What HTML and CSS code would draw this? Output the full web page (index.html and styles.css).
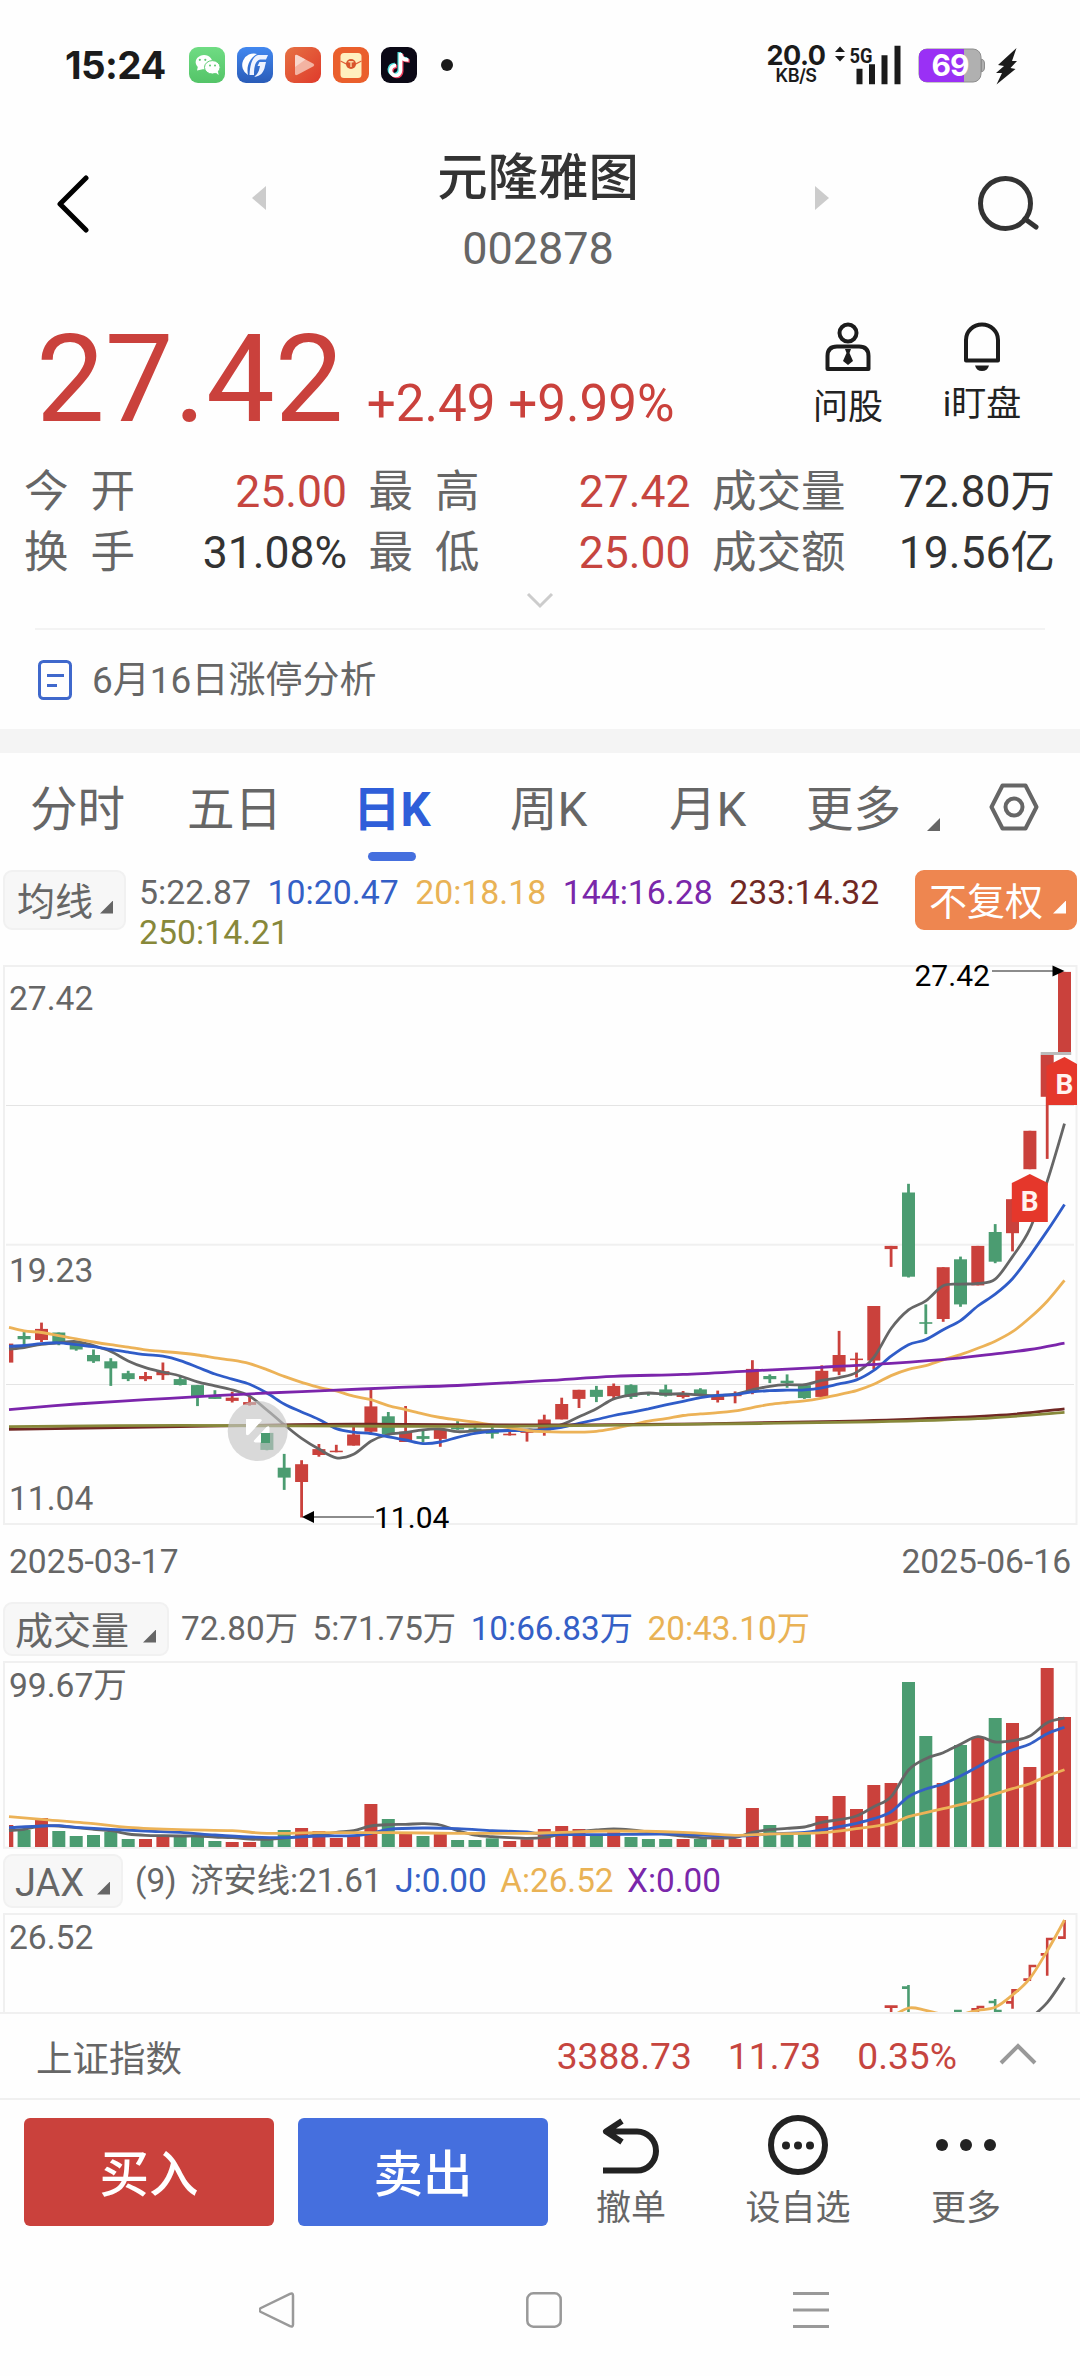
FILE: index.html
```html
<!DOCTYPE html>
<html lang="zh-CN">
<head>
    <meta charset="UTF-8">
    <meta name="viewport" content="width=device-width, initial-scale=1.0">
    <title>元隆雅图 002878</title>
    <link rel="stylesheet" href="styles.css">
</head>
<body>
    <div class="status-bar">
        <span class="time">15:24</span>
        <div class="apps">
            <svg width="36" height="36" viewBox="0 0 36 36">
                <defs><linearGradient id="gGreen" x1="0" y1="0" x2="0" y2="1"><stop offset="0" stop-color="#6fdc83"/><stop offset="1" stop-color="#54c468"/></linearGradient></defs>
                <rect width="36" height="36" rx="9" fill="url(#gGreen)"/>
                <path d="M8 23.500l0.800-3.500a8.300 7.200 0 1 1 5 2.300z" fill="#fff"/>
                <circle cx="10.800" cy="12.800" r="1.100" fill="#5cc870"/><circle cx="16.300" cy="12.800" r="1.100" fill="#5cc870"/>
                <ellipse cx="23.300" cy="20.300" rx="7.800" ry="6.700" fill="#fff" stroke="#5fcd74" stroke-width="1"/>
                <path d="M26 25l3.600 3-.7-4z" fill="#fff"/>
                <circle cx="21" cy="18.500" r="1" fill="#5cc870"/><circle cx="26" cy="18.500" r="1" fill="#5cc870"/>
            </svg>
            <svg width="36" height="36" viewBox="0 0 36 36">
                <defs><linearGradient id="gBlue" x1="0" y1="0" x2="0" y2="1"><stop offset="0" stop-color="#4288f0"/><stop offset="1" stop-color="#2a5cb8"/></linearGradient></defs>
                <rect width="36" height="36" rx="9" fill="url(#gBlue)"/>
                <path d="M20 7a11.500 11.500 0 0 0-9 21C9 19 13 11 20 7z" fill="#fff"/>
                <path d="M31 8H21c-6 2-8 10-8.500 20h4.500c0-8 1-14 6-15.500h6zM29 15h-6.500l-2 4H23c-1 5-2 8-6 11 7-1 10-5 11-11z" fill="#eef3ff"/>
            </svg>
            <svg width="36" height="36" viewBox="0 0 36 36">
                <defs><linearGradient id="gRed" x1="0" y1="0" x2="1" y2="1"><stop offset="0" stop-color="#e67243"/><stop offset="1" stop-color="#df3a2b"/></linearGradient></defs>
                <rect width="36" height="36" rx="9" fill="url(#gRed)"/>
                <path d="M10 9.500q0-2.500 2.500-1.200l16 8.500q1.500 1.200 0 2.400l-16 8.500q-2.500 1.300-2.500-1.200z" fill="#f3b3a2"/>
                <path d="M10 9.500q0-2.500 2.500-1.200l8 4.200L10 20z" fill="#f8d6cb"/>
            </svg>
            <svg width="36" height="36" viewBox="0 0 36 36">
                <rect width="36" height="36" rx="9" fill="#ea5f2c"/>
                <rect x="7.500" y="6" width="21" height="25" rx="3.500" fill="#fff0be"/>
                <path d="M7.500 14l8 4h5l8-4" fill="none" stroke="#e2603a" stroke-width="1.300"/>
                <circle cx="18" cy="17" r="5" fill="#d9552c"/>
                <path d="M15.500 14.800h5M18 15v5" stroke="#fbd7a4" stroke-width="1.400"/>
            </svg>
            <svg width="36" height="36" viewBox="0 0 36 36">
                <rect width="36" height="36" rx="9" fill="#0b0916"/>
                <g fill="none" stroke-width="3.600">
                    <path d="M18 5v17.500a5 5 0 1 1-4.500-5M18 5c0 4.500 3 7 8 7" transform="translate(0.300 0)" stroke="#4fe0dd"/>
                    <path d="M18 5v17.500a5 5 0 1 1-4.500-5M18 5c0 4.500 3 7 8 7" transform="translate(2.700 2)" stroke="#ee3c5c"/>
                    <path d="M18 5v17.500a5 5 0 1 1-4.500-5M18 5c0 4.500 3 7 8 7" transform="translate(1.500 1)" stroke="#fff"/>
                </g>
            </svg>
            <i class="dot"></i>
        </div>
        <div class="speed"><b>20.0</b><small>KB/S</small></div>
        <svg class="signal" width="69" height="38" viewBox="0 0 69 38">
            <path d="M1 6l5-5.500L11 6zM1 10l5 5.500L11 10z" fill="#1b1b1b"/>
            <text x="15.500" y="16.500" class="net" textLength="23" lengthAdjust="spacingAndGlyphs">5G</text>
            <path d="M25.500 25.500V35M38 21V35M50.500 12V35M63.500 2.500V35" stroke="#1b1b1b" stroke-width="6" stroke-linecap="square" transform="translate(0 .2)"/>
        </svg>
        <svg class="battery" width="67" height="36" viewBox="0 0 67 36">
            <rect x="1" y="1" width="62" height="33" rx="8" fill="#b0b0b0" stroke="#8e8e8e"/>
            <path d="M63.500 11q3 1 3 4v5q0 3-3 4z" fill="#b0b0b0" stroke="#8e8e8e" stroke-width="1"/>
            <path d="M9 1h37v33H9q-8 0-8-8V9q0-8 8-8z" fill="#9a30f5"/>
            <text x="32" y="28" class="level">69</text>
        </svg>
        <svg class="bolt" width="22" height="37" viewBox="0 0 22 37">
            <path d="M20.500 0L2 17l6 1L0 25h6L.5 36.500 19.500 21l-5-1 6.500-7h-5z" fill="#1b1b1b"/>
        </svg>
    </div>

    <div class="header">
        <svg class="back" width="34" height="60" viewBox="0 0 34 60"><path d="M29 4L3 30l26 26" fill="none" stroke="#000" stroke-width="5" stroke-linecap="round" stroke-linejoin="round"/></svg>
        <svg class="switch" width="14" height="24" viewBox="0 0 14 24"><path d="M14 0v24L0 12z" fill="#ccc"/></svg>
        <div class="title">
            <h1>元隆雅图</h1>
            <p>002878</p>
        </div>
        <svg class="switch" width="14" height="24" viewBox="0 0 14 24"><path d="M0 0v24l14-12z" fill="#ccc"/></svg>
        <svg class="search" width="64" height="58" viewBox="0 0 64 58"><circle cx="29.500" cy="28.500" r="25" fill="none" stroke="#333" stroke-width="5"/><path d="M49 44l11 8" stroke="#333" stroke-width="5" stroke-linecap="round"/></svg>
    </div>

    <div class="quote">
        <span class="price">27.42</span>
        <span class="change">+2.49 +9.99%</span>
        <div class="tools">
            <div class="tool">
                <svg width="46" height="50" viewBox="0 0 46 50">
                    <circle cx="23" cy="11" r="8.500" fill="none" stroke="#1c1c1c" stroke-width="4"/>
                    <path d="M2.500 47V34q0-9.500 9.500-9.500h22q9.500 0 9.500 9.500v13z" fill="none" stroke="#1c1c1c" stroke-width="4" stroke-linejoin="round"/>
                    <path d="M20 27h6l-1.500 4L28 39l-5 4-5-4 3.500-8z" fill="#1c1c1c"/>
                </svg>
                <span>问股</span>
            </div>
            <div class="tool tool-watch">
                <svg width="40" height="50" viewBox="0 0 40 50">
                    <path d="M4 38.500V18a16 15.500 0 0 1 32 0v20.500z" fill="none" stroke="#1c1c1c" stroke-width="4" stroke-linejoin="round"/>
                    <path d="M13 43.500h14q-1.500 5.500-7 5.500t-7-5.500z" fill="#1c1c1c"/>
                </svg>
                <span>i盯盘</span>
            </div>
        </div>
    </div>

    <div class="stats">
        <div><label class="wide">今开</label><span class="up">25.00</span></div>
        <div><label class="wide">最高</label><span class="up">27.42</span></div>
        <div><label>成交量</label><span>72.80万</span></div>
        <div><label class="wide">换手</label><span>31.08%</span></div>
        <div><label class="wide">最低</label><span class="up">25.00</span></div>
        <div><label>成交额</label><span>19.56亿</span></div>
    </div>
    <div class="expand">
        <svg width="28" height="18" viewBox="0 0 28 18"><path d="M2 2l12 12L26 2" fill="none" stroke="#ccc" stroke-width="3"/></svg>
    </div>

    <div class="analysis">
        <svg width="34" height="40" viewBox="0 0 34 40">
            <rect x="1.500" y="1.500" width="31" height="37" rx="4" fill="none" stroke="#3f68cc" stroke-width="3"/>
            <path d="M9 15.500h17M9 25.500h10" stroke="#3f68cc" stroke-width="3"/>
        </svg>
        <span>6月16日涨停分析</span>
    </div>

    <div class="tabs">
        <span>分时</span>
        <span>五日</span>
        <span class="active">日K</span>
        <span>周K</span>
        <span>月K</span>
        <span class="more">更多<i class="corner"></i></span>
        <svg width="50" height="48" viewBox="0 0 50 48"><path d="M13.500 2.500h23L47.500 24 36.500 45.500h-23L2.500 24z" fill="none" stroke="#666" stroke-width="4" stroke-linejoin="round"/><circle cx="25" cy="24" r="8.500" fill="none" stroke="#666" stroke-width="4"/></svg>
    </div>

    <div class="ma-row">
        <div class="pill pill-ma">均线<i class="corner"></i></div>
        <div class="legend">
            <span>5:22.87</span>
            <span class="blue">10:20.47</span>
            <span class="yellow">20:18.18</span>
            <span class="purple">144:16.28</span>
            <span class="brown">233:14.32</span>
            <span class="olive">250:14.21</span>
        </div>
        <div class="pill pill-orange">不复权<i class="corner"></i></div>
    </div>

    <svg id="priceChart" class="chart" width="1080" height="580" viewBox="0 0 1080 580"></svg>
    <div class="dates"><span>2025-03-17</span><span>2025-06-16</span></div>

    <div class="sub-row sub-volume">
        <div class="pill pill-volume">成交量<i class="corner"></i></div>
        <div class="legend">
            <span>72.80万</span>
            <span>5:71.75万</span>
            <span class="blue">10:66.83万</span>
            <span class="yellow">20:43.10万</span>
        </div>
    </div>
    <svg id="volumeChart" class="chart" width="1080" height="188" viewBox="0 0 1080 188"></svg>

    <div class="sub-row sub-jax">
        <div class="pill pill-jax">JAX<i class="corner"></i></div>
        <div class="legend">
            <span>(9)</span>
            <span>济安线:21.61</span>
            <span class="blue">J:0.00</span>
            <span class="yellow">A:26.52</span>
            <span class="purple">X:0.00</span>
        </div>
    </div>
    <svg id="jaxChart" class="chart" width="1080" height="99" viewBox="0 0 1080 99"></svg>

    <div class="index-row">
        <span class="name">上证指数</span>
        <span class="up">3388.73</span>
        <span class="up">11.73</span>
        <span class="up">0.35%</span>
        <svg width="38" height="22" viewBox="0 0 38 22"><path d="M2 20L19 3l17 17" fill="none" stroke="#999" stroke-width="4"/></svg>
    </div>

    <div class="actions">
        <button class="btn buy">买入</button>
        <button class="btn sell">卖出</button>
        <div class="action action-undo">
            <svg width="60" height="60" viewBox="0 0 60 60"><path d="M21 6L5 16.500 21 27M5 16.500h31a19 19.500 0 0 1 0 39H2" fill="none" stroke="#222" stroke-width="6" stroke-linejoin="round"/></svg>
            <span>撤单</span>
        </div>
        <div class="action action-star">
            <svg width="60" height="60" viewBox="0 0 60 60"><circle cx="30" cy="30" r="27" fill="none" stroke="#222" stroke-width="6"/><g fill="#222"><circle cx="18" cy="30.500" r="4"/><circle cx="30" cy="30.500" r="4"/><circle cx="42" cy="30.500" r="4"/></g></svg>
            <span>设自选</span>
        </div>
        <div class="action action-more">
            <svg width="60" height="60" viewBox="0 0 60 60"><g fill="#222"><circle cx="6" cy="30" r="6"/><circle cx="30" cy="30" r="6"/><circle cx="54" cy="30" r="6"/></g></svg>
            <span>更多</span>
        </div>
    </div>

    <div class="nav">
        <svg width="36" height="36" viewBox="0 0 36 36"><path d="M31 1.800q3-1.300 3 1.700v29q0 3-3 1.700L2 20q-3-2 0-4z" fill="none" stroke="#999" stroke-width="2.500"/></svg>
        <svg width="36" height="36" viewBox="0 0 36 36"><rect x="1.300" y="1.300" width="33.400" height="33.400" rx="6" fill="none" stroke="#999" stroke-width="2.500"/></svg>
        <svg width="36" height="36" viewBox="0 0 36 36"><path d="M0 1.500h36M0 18h36M0 34.500h36" stroke="#999" stroke-width="3"/></svg>
    </div>

    <script src="chart.js"></script>
</body>
</html>
```
FILE: styles.css
```css
* {
    box-sizing: border-box;
}
body {
    margin: 0;
    width: 1080px;
    height: 2376px;
    overflow: hidden;
    background-color: #fefefe;
    color: #666666;
    font-family: Roboto, "Noto Sans CJK SC", sans-serif;
}
svg {
    display: block;
    flex: none;
}
h1, p {
    margin: 0;
    font-weight: normal;
}

/* status bar */
.status-bar {
    display: flex;
    align-items: center;
    height: 130px;
    padding-left: 65px;
    color: #1b1b1b;
    font-family: Inter, sans-serif;
}
.time {
    width: 124px;
    font-size: 38.5px;
    font-weight: 700;
    letter-spacing: -0.6px;
    white-space: nowrap;
}
.apps {
    display: flex;
    align-items: center;
    gap: 12px;
    width: 575px;
}
.dot {
    width: 12px;
    height: 12px;
    margin-left: 12px;
    border-radius: 50%;
    background-color: #1b1b1b;
}
.speed {
    display: flex;
    flex-direction: column;
    align-items: center;
    width: 64px;
}
.speed b {
    font-size: 27px;
    font-weight: 700;
    line-height: 21px;
    letter-spacing: -0.5px;
}
.speed small {
    font-size: 18px;
    font-weight: 600;
    line-height: 19px;
    letter-spacing: -0.5px;
}
.signal {
    margin-left: 6px;
    overflow: visible;
}
.net {
    font: 700 21px Roboto, sans-serif;
    fill: #1b1b1b;
}
.battery {
    margin: 2px 0 0 15px;
}
.level {
    font: 700 30px Inter, sans-serif;
    letter-spacing: -1px;
    text-anchor: middle;
    fill: #ffffff;
}
.bolt {
    margin: 2px 0 0 11px;
}

/* header */
.header {
    display: grid;
    grid-template-columns: 195px 14px 1fr 14px 211px;
    height: 173px;
    padding: 13px 40px 0 57px;
}
.back {
    margin-top: 31px;
}
.switch {
    margin-top: 43px;
}
.title {
    padding-right: 5px;
    text-align: center;
}
.title h1 {
    font-size: 50.4px;
    font-weight: 500;
    line-height: 70px;
    color: #333333;
}
.title p {
    margin-top: 6px;
    font-size: 45px;
    line-height: 60px;
}
.search {
    margin: 32px 0 0 147px;
}

/* quote */
.quote {
    display: flex;
    align-items: baseline;
    height: 159px;
    padding-left: 36px;
    color: #ca413c;
}
.price {
    font-size: 122.5px;
    line-height: 153px;
}
.change {
    margin-left: 23px;
    font-size: 51.2px;
}
.tools {
    display: flex;
    align-self: flex-start;
    margin: 19px 0 0 auto;
    padding-right: 48px;
    color: #222222;
}
.tool {
    display: flex;
    flex-direction: column;
    align-items: center;
    width: 100px;
    font-size: 35px;
    line-height: 50px;
}
.tool span {
    margin-top: 11px;
}
.tool-watch {
    margin-left: 34px;
}
.tool-watch span {
    margin-top: 8px;
}
.stats {
    display: grid;
    grid-template-columns: 323px 322px 343px;
    column-gap: 21.5px;
    padding-left: 24px;
    font-size: 44.5px;
    line-height: 61px;
}
.stats div {
    display: flex;
    justify-content: space-between;
}
.stats span {
    color: #333333;
}
.stats .wide {
    letter-spacing: 22px;
}
.up, .stats .up {
    color: #c6453f;
}
.expand {
    display: flex;
    justify-content: center;
    height: 46px;
    margin: 0 35px;
    padding-top: 8px;
    border-bottom: 2px solid #f3f3f3;
}
.analysis {
    display: flex;
    align-items: center;
    gap: 20px;
    height: 123px;
    padding: 0 38px;
    border-bottom: 24px solid #f4f4f4;
    font-size: 37px;
}
.analysis span {
    padding-bottom: 5px;
}

/* tabs */
.tabs {
    display: grid;
    grid-template-columns: 157px 166px 157px 159px 137px 183px 50px;
    height: 113px;
    padding: 27px 0 0 30px;
    font-size: 47.5px;
    line-height: 60px;
}
.tabs svg {
    margin-top: 3px;
}
.active {
    font-weight: 700;
    color: #2f5ed9;
}
.active::after {
    content: "";
    display: block;
    width: 48px;
    height: 9px;
    margin: 12px 0 0 15px;
    border-radius: 4.5px;
    background-color: #456fde;
}
.corner {
    display: block;
    width: 13px;
    height: 13px;
    background-color: #666666;
    clip-path: polygon(100% 0, 100% 100%, 0 100%);
}
.more {
    display: flex;
}
.more .corner {
    margin: 38px 0 0 26px;
}

/* indicator rows */
.pill {
    display: flex;
    align-items: center;
    flex: none;
    height: 54px;
    padding-top: 3px;
    border: 2px solid #f1f1f1;
    border-radius: 9px;
    background-color: #f7f7f7;
    font-size: 38px;
    line-height: 50px;
}
.pill .corner {
    margin: 11px 11px 0 auto;
}
.legend {
    display: flex;
    flex-wrap: wrap;
    column-gap: 14.5px;
    font-size: 33.3px;
    line-height: 40px;
}
.ma-row {
    display: flex;
    align-items: flex-start;
    height: 94px;
    padding: 4px 3px 0;
}
.ma-row .pill {
    height: 60px;
}
.ma-row .legend {
    width: 760px;
    margin-top: 3px;
    column-gap: 16.5px;
    font-size: 33.8px;
}
.pill-ma {
    width: 123px;
    margin-right: 13px;
    padding-left: 12px;
}
.pill-orange {
    width: 162px;
    margin-left: auto;
    padding-left: 12px;
    border-color: #ee8650;
    background-color: #ee8650;
    color: #ffffff;
}
.pill-orange .corner {
    margin-right: 9px;
    background-color: #ffffff;
}
.blue {
    color: #345fc6;
}
.yellow {
    color: #e9b255;
}
.purple {
    color: #7a27aa;
}
.brown {
    color: #702824;
}
.olive {
    color: #87883a;
}
.dates {
    display: flex;
    justify-content: space-between;
    height: 44px;
    padding: 0 9px;
    font-size: 33.6px;
    line-height: 44px;
}
.sub-row {
    display: flex;
    align-items: center;
    padding-left: 3px;
}
.sub-volume {
    height: 77px;
    padding-top: 13px;
}
.sub-jax {
    height: 64px;
}
.sub-jax .legend {
    column-gap: 13.5px;
}
.pill-volume {
    width: 166px;
    margin-right: 12px;
    padding-left: 10px;
}
.pill-jax {
    width: 120px;
    margin-right: 12px;
    padding-left: 10px;
}

/* charts */
.chart {
    overflow: hidden;
}
.axis {
    font-size: 33.6px;
    fill: #666666;
}
.mark {
    font-size: 30px;
    fill: #000000;
}
.flag {
    font: 700 28px Roboto, sans-serif;
    text-anchor: middle;
    fill: #fff2f0;
}

/* bottom */
.index-row {
    display: flex;
    align-items: center;
    height: 88px;
    padding: 0 43px 0 36px;
    border-top: 2px solid #f0f0f0;
    border-bottom: 2px solid #f0f0f0;
    font-size: 37.2px;
}
.name {
    margin-right: auto;
    font-size: 36.5px;
}
.index-row .up {
    margin-right: 36px;
}
.index-row svg {
    margin: -4px 0 0 6px;
}
.actions {
    display: flex;
    height: 162px;
    padding: 18px 0 0 24px;
}
.btn {
    width: 250px;
    height: 108px;
    margin-right: 24px;
    padding: 0 0 4px;
    border: none;
    border-radius: 6px;
    color: #ffffff;
    font-family: inherit;
    font-size: 49.5px;
    font-weight: 500;
}
.buy {
    background-color: #ca413c;
}
.sell {
    background-color: #456fde;
}
.action {
    display: flex;
    flex-direction: column;
    align-items: center;
    width: 120px;
    margin-top: -3px;
    font-size: 35px;
    line-height: 50px;
}
.action span {
    margin-top: 9px;
    white-space: nowrap;
}
.action-undo {
    margin-left: -1px;
}
.action-star {
    margin-left: 47px;
}
.action-more {
    margin-left: 48px;
}
.nav {
    display: flex;
    gap: 231px;
    padding: 30px 0 0 259px;
}
```
FILE: chart.js
```js
var RED = "#ca413c";
var GREEN = "#4b9c71";
var STEP = 17.34;
var FIRST = 6.8;

// color, high, low, body top, body bottom
var candles = [
    ["r", 970, 1018, 970, 1018], ["g", 941, 974, 951, 959], ["r", 917, 966, 933, 961], ["g", 942, 974, 942, 968],
    ["g", 967, 988, 967, 985], ["g", 985, 1019, 999, 1015], ["g", 1007, 1077, 1015, 1033], ["g", 1039, 1065, 1045, 1060],
    ["r", 1042, 1065, 1052, 1060], ["r", 1018, 1062, 1040, 1050], ["g", 1053, 1076, 1060, 1075], ["g", 1075, 1128, 1075, 1103],
    ["g", 1088, 1110, 1103, 1110], ["r", 1092, 1119, 1107, 1115], ["r", 1103, 1127, 1118, 1125], ["g", 1190, 1240, 1196, 1239],
    ["g", 1249, 1340, 1284, 1309], ["r", 1265, 1410, 1275, 1320], ["r", 1224, 1256, 1237, 1252], ["r", 1226, 1245, 1241, 1244],
    ["r", 1180, 1228, 1200, 1228], ["r", 1085, 1200, 1129, 1193], ["g", 1143, 1203, 1154, 1200], ["r", 1128, 1219, 1193, 1219],
    ["g", 1190, 1220, 1204, 1211], ["r", 1185, 1231, 1187, 1211], ["g", 1166, 1188, 1182, 1187], ["g", 1178, 1195, 1185, 1189],
    ["g", 1180, 1210, 1188, 1198], ["r", 1190, 1203, 1198, 1202], ["r", 1190, 1218, 1192, 1196], ["r", 1150, 1203, 1162, 1190],
    ["r", 1107, 1162, 1123, 1162], ["r", 1087, 1133, 1087, 1110], ["g", 1077, 1118, 1087, 1105], ["r", 1071, 1108, 1077, 1103],
    ["g", 1073, 1110, 1075, 1105], ["g", 1093, 1102, 1094, 1098], ["g", 1074, 1104, 1086, 1102], ["r", 1090, 1109, 1096, 1105],
    ["g", 1083, 1103, 1086, 1102], ["r", 1089, 1119, 1101, 1113], ["r", 1091, 1121, 1098, 1103], ["r", 1012, 1098, 1034, 1090],
    ["g", 1048, 1070, 1052, 1060], ["g", 1048, 1082, 1064, 1070], ["g", 1075, 1110, 1075, 1108], ["r", 1025, 1108, 1039, 1105],
    ["r", 938, 1050, 999, 1041], ["r", 993, 1056, 1008, 1011], ["r", 875, 1035, 875, 1013], ["r", 723, 776, 723, 731],
    ["g", 566, 803, 588, 801], ["g", 871, 946, 916, 920], ["r", 777, 915, 777, 908], ["g", 750, 877, 757, 871],
    ["r", 723, 823, 723, 823], ["g", 668, 767, 688, 763], ["r", 605, 737, 605, 691], ["r", 432, 529, 432, 529],
    ["r", 240, 503, 240, 346], ["r", 30, 235, 30, 235]
];

var ma5 = [984, 980, 972, 968, 965, 975, 990, 1014, 1031, 1042, 1052, 1067, 1077, 1087, 1103, 1138, 1175, 1210, 1237, 1259, 1250, 1217, 1200, 1195, 1188, 1186, 1193, 1191, 1190, 1190, 1188, 1187, 1175, 1155, 1135, 1110, 1100, 1095, 1098, 1097, 1100, 1102, 1098, 1087, 1078, 1074, 1074, 1063, 1056, 1043, 1005, 932, 885, 862, 824, 820, 818, 807, 750, 680, 560, 414];
var ma10 = [977, 975, 970, 968, 973, 978, 985, 992, 998, 1002, 1013, 1030, 1047, 1060, 1073, 1095, 1123, 1143, 1162, 1185, 1194, 1198, 1206, 1214, 1223, 1219, 1207, 1197, 1192, 1190, 1190, 1188, 1182, 1172, 1162, 1152, 1144, 1135, 1125, 1116, 1107, 1101, 1099, 1092, 1089, 1088, 1087, 1082, 1072, 1062, 1038, 1002, 973, 960, 935, 912, 875, 845, 806, 748, 685, 618];
var ma20 = [929, 938, 942, 950, 958, 966, 973, 979, 986, 990, 994, 999, 1006, 1012, 1021, 1036, 1053, 1068, 1081, 1090, 1103, 1112, 1127, 1137, 1148, 1157, 1163, 1169, 1176, 1183, 1190, 1193, 1194, 1194, 1192, 1185, 1176, 1166, 1160, 1152, 1148, 1145, 1140, 1132, 1124, 1119, 1115, 1108, 1099, 1089, 1073, 1051, 1035, 1026, 1011, 998, 982, 964, 940, 905, 863, 810];
var ma144 = [[0, 1137], [4, 1123], [8, 1112], [12, 1102], [15, 1095], [19, 1088], [22, 1082], [26, 1076], [31, 1064], [35, 1053], [39, 1048], [43, 1039], [47, 1030], [51, 1020], [55, 1006], [57, 996], [59, 985], [61, 969]];
var ma233 = [[0, 1187], [10, 1180], [20, 1174], [30, 1176], [40, 1173], [48, 1167], [54, 1158], [58, 1149], [61, 1135]];
var ma250 = [[0, 1180], [10, 1177], [20, 1179], [30, 1179], [40, 1174], [50, 1168], [56, 1160], [61, 1144]];

var volumes = [735, 750, 714, 753, 768, 765, 755, 777, 777, 768, 768, 770, 783, 786, 786, 775, 750, 744, 753, 774, 765, 672, 717, 762, 768, 762, 780, 780, 775, 783, 778, 747, 738, 747, 765, 757, 771, 777, 777, 777, 777, 778, 777, 684, 735, 762, 762, 708, 648, 687, 615, 609, 306, 468, 609, 495, 472, 414, 429, 561, 264, 411];
var vol5 = [752, 748, 738, 738, 743, 748, 752, 762, 766, 767, 768, 768, 771, 773, 777, 778, 774, 770, 765, 757, 752, 738, 734, 733, 731, 735, 752, 765, 770, 773, 775, 772, 762, 755, 750, 747, 750, 756, 762, 768, 773, 774, 773, 757, 749, 745, 741, 727, 719, 708, 680, 650, 570, 536, 518, 493, 470, 486, 482, 468, 428, 414];
var vol10 = [[0, 743], [2, 738], [3, 737], [4, 742], [6, 748], [8, 753], [10, 757], [12, 765], [14, 771], [16, 773], [18, 768], [20, 767], [21, 760], [22, 748], [24, 744], [26, 746], [28, 752], [30, 756], [31, 763], [34, 764], [38, 762], [42, 768], [44, 762], [46, 757], [47, 750], [48, 740], [49, 730], [50, 716], [51, 695], [52, 650], [53, 627], [54, 612], [55, 588], [56, 560], [57, 532], [58, 510], [59, 492], [60, 461], [61, 442]];
var vol20 = [[0, 710], [2, 718], [5, 731], [7, 742], [10, 749], [13, 752], [15, 760], [18, 758], [22, 758], [26, 760], [30, 760], [32, 757], [35, 753], [39, 757], [42, 766], [44, 762], [47, 758], [49, 746], [51, 730], [52, 710], [53, 698], [54, 686], [55, 674], [56, 660], [57, 642], [58, 626], [59, 611], [60, 588], [61, 569]];

// index, color, high, low, left tick, right tick
var jaxBars = [
    [51, "r", 1280, 1310, 1280, 1280], [52, "g", 1215, 1310, 1223, null], [55, "g", 1290, 1310, 1293, null],
    [56, "r", 1280, 1310, 1288, 1281], [57, "g", 1257, 1310, 1266, 1293], [58, "r", 1228, 1286, 1267, 1231],
    [59, "r", 1157, 1200, 1199, 1158], [60, "r", 1076, 1187, 1123, 1077], [61, "r", 1020, 1074, 1073, null]
];
var jaxA = [[51, 1312], [52, 1284], [53, 1291], [54, 1303], [55, 1303], [56, 1291], [57, 1282], [58, 1245], [59, 1195], [60, 1113], [61, 1020]];
var jaxLine = [[59, 1316], [60, 1268], [61, 1193]];

function priceY(v) { return v / 2.529; }
function volumeY(v) { return v / 3 - 81; }
function jaxY(v) { return v / 3 - 333; }
function posX(i) { return FIRST + i * STEP; }

function rect(x, y, w, h, fill) {
    return '<rect x="' + x.toFixed(1) + '" y="' + y.toFixed(1) + '" width="' + w.toFixed(1) + '" height="' + h.toFixed(1) + '" fill="' + fill + '"/>';
}

function stroke(d, color, width) {
    return '<path d="' + d + '" fill="none" stroke="' + color + '" stroke-width="' + width + '"/>';
}

function curve(data, toY, color) {
    var pts = data.map(function(v, i) {
        return Array.isArray(v) ? [Math.max(posX(v[0]), 9), toY(v[1])] : [Math.max(posX(i), 9), toY(v)];
    });
    var d = "M" + pts[0].join(" ");
    for (var i = 0; i < pts.length - 1; i++) {
        var a = pts[i - 1] || pts[i], b = pts[i], c = pts[i + 1], e = pts[i + 2] || c;
        d += "C" + [
            b[0] + (c[0] - a[0]) / 6, b[1] + (c[1] - a[1]) / 6,
            c[0] - (e[0] - b[0]) / 6, c[1] - (e[1] - b[1]) / 6,
            c[0], c[1]
        ].map(function(n) { return n.toFixed(1); }).join(" ");
    }
    return stroke(d, color, 2.8);
}

function body(i, top, bottom, color) {
    var left = Math.max(posX(i) - 6.5, 9);
    return rect(left, top, posX(i) + 6.5 - left, Math.max(bottom - top, 1.5), color);
}

function flag(x, y, clip) {
    var right = clip ? x + 12.5 : x + 18;
    var corner = clip ? y + 7 : y + 9;
    return '<path d="M' + x + ' ' + y + 'L' + right + ' ' + corner + 'V' + (y + 48) + 'H' + (x - 18) + 'V' + (y + 9) + 'z" fill="#e5372b"/>' +
        '<text class="flag" x="' + x + '" y="' + (y + 37) + '">B</text>';
}

function drawPrice() {
    var s = stroke("M4 6H1076.500V564H4z", "#f0f0f0", 2);
    s += stroke("M6 145.500H1074M6 424.500H1074", "#e4e4e4", 1);
    s += stroke("M6 284.700H1074", "#f0f0f0", 2);
    s += '<text class="axis" x="9" y="49.500">27.42</text><text class="axis" x="9" y="322">19.23</text><text class="axis" x="9" y="549.500">11.04</text>';
    candles.forEach(function(c, i) {
        var color = c[0] === "r" ? RED : GREEN;
        if (i > 0) s += rect(posX(i) - 1.4, priceY(c[1]), 2.8, priceY(c[2] - c[1]), color);
        s += body(i, priceY(c[3]), priceY(c[4]), color);
    });
    s += curve(ma5, priceY, "#666666");
    s += curve(ma10, priceY, "#2f5cc8");
    s += curve(ma20, priceY, "#ecb257");
    s += curve(ma144, priceY, "#7b25ab");
    s += curve(ma233, priceY, "#702824");
    s += curve(ma250, priceY, "#87883a");
    s += rect(1040.7, 92, 30.5, 3, "#bbbbbb");
    s += flag(1064.5, 97, true) + flag(1029.8, 214, false);
    // high / low marks
    s += '<text class="mark" x="914.500" y="26">27.42</text>' + stroke("M992 11H1053", "#666", 1.5) + '<path d="M1052.500 5.500l12 5.500-12 5.500z"/>';
    s += '<text class="mark" x="374" y="568">11.04</text>' + stroke("M313 557H374", "#666", 1.5) + '<path d="M314 551l-12 6 12 6z"/>';
    // floating button
    s += '<circle cx="257.700" cy="471" r="30" fill="#c4c4c4" fill-opacity="0.640"/>';
    s += '<path d="M246 459h14q3 .5 1 2.500l-12 13q-3 2-3-1zM269.500 482.500h-14q-3-.5-1-2.500l12-13q3-2 3 1z" fill="#fff"/>';
    s += rect(261, 473, 9, 10, GREEN);
    document.getElementById("priceChart").innerHTML = s;
}

function drawVolume() {
    var s = stroke("M4 1H1076.500V186.700H4z", "#f0f0f0", 2);
    s += '<text class="axis" x="9" y="36">99.67万</text>';
    volumes.forEach(function(v, i) {
        s += body(i, volumeY(v), 186, candles[i][0] === "r" ? RED : GREEN);
    });
    s += curve(vol5, volumeY, "#666666");
    s += curve(vol10, volumeY, "#345fc6");
    s += curve(vol20, volumeY, "#ecb257");
    document.getElementById("volumeChart").innerHTML = s;
}

function drawJax() {
    var s = stroke("M4 110V1H1076.500V110", "#f0f0f0", 2);
    s += '<text class="axis" x="9" y="36">26.52</text>';
    jaxBars.forEach(function(b) {
        var x = posX(b[0]), d = "M" + x + " " + jaxY(b[2]) + "V" + jaxY(b[3]);
        d += "M" + (x - 6.5) + " " + jaxY(b[4]) + "H" + (x + 1.3);
        if (b[5] !== null) d += "M" + (x - 1.3) + " " + jaxY(b[5]) + "H" + (x + 6.5);
        s += stroke(d, b[1] === "r" ? RED : GREEN, 2.6);
    });
    s += curve(jaxA, jaxY, "#ecb257");
    s += curve(jaxLine, jaxY, "#666666");
    document.getElementById("jaxChart").innerHTML = s;
}

drawPrice();
drawVolume();
drawJax();
```
